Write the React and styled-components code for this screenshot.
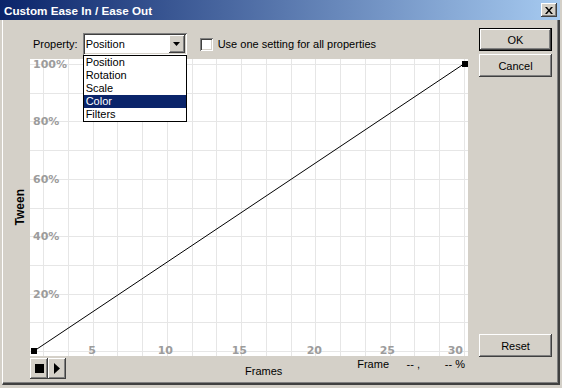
import React from 'react';
import styled, { createGlobalStyle } from 'styled-components';

const GlobalStyle = createGlobalStyle`
  html, body {
    margin: 0;
    padding: 0;
    background: #d4d0c8;
  }
  body {
    font-family: "Liberation Sans", Arial, sans-serif;
    font-size: 11px;
    color: #000;
  }
`;

const raised = `
  background: #d4d0c8;
  box-shadow: inset -1px -1px #404040, inset 1px 1px #fff, inset -2px -2px #808080, inset 2px 2px #d4d0c8;
`;

const sunken = `
  background: #fff;
  box-shadow: inset 1px 1px #808080, inset -1px -1px #fff, inset 2px 2px #404040, inset -2px -2px #d4d0c8;
`;

const Window = styled.div`
  width: 562px;
  height: 388px;
  display: flex;
  flex-direction: column;
  background: #d4d0c8;
  overflow: hidden;
`;

const TitleBar = styled.div`
  flex: none;
  width: 560px;
  height: 20px;
  box-sizing: border-box;
  display: flex;
  align-items: center;
  justify-content: space-between;
  padding: 0 3px 0 4px;
  background: linear-gradient(to right, #0a246a, #a6caf0);
  color: #fff;
  font-weight: bold;
  font-size: 11.7px;
`;

const CloseButton = styled.div`
  width: 16px;
  height: 14px;
  display: flex;
  align-items: center;
  justify-content: center;
  ${raised}
`;

const Frame = styled.div`
  flex: 1;
  display: flex;
  margin: 0 2px 3px 2px;
  border-left: 1px solid #fff;
  border-right: 2px solid #404040;
  border-bottom: 2px solid #404040;
  box-shadow: inset -1px -1px #808080;
`;

const MainCol = styled.div`
  width: 465px;
  display: flex;
  flex-direction: column;
`;

const TopRow = styled.div`
  display: flex;
  align-items: center;
  height: 22px;
  margin: 13px 0 4px;
  padding-left: 30px;
`;

const FieldLabel = styled.span`
  margin-right: 5px;
`;

const Select = styled.div`
  position: relative;
  width: 104px;
  height: 22px;
  box-sizing: border-box;
  display: flex;
  align-items: center;
  justify-content: space-between;
  padding: 2px 2px 2px 3px;
  ${sunken}
`;

const ArrowButton = styled.div`
  width: 16px;
  height: 18px;
  display: flex;
  align-items: center;
  justify-content: center;
  ${raised}
`;

const DropList = styled.ul`
  position: absolute;
  top: 22px;
  left: 0;
  width: 104px;
  box-sizing: border-box;
  margin: 0;
  padding: 0;
  list-style: none;
  background: #fff;
  border: 1px solid #000;
  z-index: 5;
`;

const DropItem = styled.li`
  height: 13px;
  line-height: 13px;
  padding-left: 2px;
  background: ${p => (p.$active ? '#0a246a' : 'transparent')};
  color: ${p => (p.$active ? '#fff' : '#000')};
`;

const Check = styled.div`
  width: 13px;
  height: 13px;
  margin: 0 5px 0 13px;
  ${sunken}
`;

const ChartRow = styled.div`
  display: flex;
  height: 297px;
`;

const AxisTitle = styled.div`
  width: 27px;
  box-sizing: border-box;
  padding-left: 6px;
  display: flex;
  align-items: center;
  justify-content: center;
  span {
    writing-mode: vertical-rl;
    transform: rotate(180deg);
    font-weight: bold;
    font-size: 12px;
  }
`;

const ChartBox = styled.div`
  width: 438px;
  height: 297px;
  background: #fff;
`;

const BottomRow = styled.div`
  flex: 1;
  display: flex;
  padding-left: 27px;
  padding-right: 3px;
`;

const PlayGroup = styled.div`
  display: flex;
  margin-top: 2px;
  height: 21px;
`;

const PlayButton = styled.div`
  width: 18px;
  height: 21px;
  display: flex;
  align-items: center;
  justify-content: center;
  ${raised}
`;

const FramesLabel = styled.div`
  margin: 9px 0 0 179px;
`;

const Readout = styled.div`
  margin: 2px 0 0 auto;
  display: flex;
`;

const ReadoutValue = styled.span`
  width: ${p => p.$w}px;
  text-align: right;
  white-space: pre;
`;

const ButtonCol = styled.div`
  width: 73px;
  margin-left: 11px;
  padding: 8px 0 26px;
  display: flex;
  flex-direction: column;
  gap: 3px;
`;

const PushButton = styled.div`
  height: 23px;
  display: flex;
  align-items: center;
  justify-content: center;
  ${raised}
  ${p => p.$default && `
    box-shadow: inset 0 0 0 1px #000, inset -2px -2px #404040, inset 2px 2px #fff, inset -3px -3px #808080;
  `}
  ${p => p.$bottom && 'margin-top: auto;'}
`;

const GRID = '#e6e6e6';
const LABEL = '#9c9c9c';

function EaseChart() {
  const vLines = Array.from({ length: 18 }, (_, k) => Math.round(13 + 24.76 * k) + 0.5);
  const hLines = Array.from({ length: 11 }, (_, k) => Math.round(5 + 28.7 * k) + 0.5);
  const yLabels = [100, 80, 60, 40, 20];
  const xLabels = [[5, 66], [10, 143], [15, 217], [20, 292], [25, 365], [30, 433]];
  return (
    <svg width="438" height="297" style={{ display: 'block' }}>
      <g stroke={GRID} strokeWidth="1" shapeRendering="crispEdges">
        {vLines.map(x => <line key={'v' + x} x1={x} y1="0" x2={x} y2="297" />)}
        {hLines.map(y => <line key={'h' + y} x1="0" y1={y} x2="438" y2={y} />)}
      </g>
      <g fill={LABEL} fontFamily='"DejaVu Sans", Verdana, sans-serif' fontWeight="bold" fontSize="11">
        {yLabels.map(p => {
          const y = 5 + ((100 - p) / 10) * 28.7;
          return <text key={p} x="3" y={y + 4}>{p}%</text>;
        })}
        {xLabels.map(([n, x]) => <text key={n} x={x} y="295" textAnchor="end">{n}</text>)}
      </g>
      <line x1="4" y1="292" x2="434.5" y2="4.5" stroke="#000" strokeWidth="1" />
      <rect x="1" y="289" width="6" height="6" fill="#000" />
      <rect x="432" y="2" width="6" height="6" fill="#000" />
    </svg>
  );
}

export default function App() {
  const options = ['Position', 'Rotation', 'Scale', 'Color', 'Filters'];
  return (
    <>
      <GlobalStyle />
      <Window>
        <TitleBar>
          <span>Custom Ease In / Ease Out</span>
          <CloseButton>
            <svg width="8" height="7" viewBox="0 0 8 7">
              <path d="M0 0h2l2 2.5L6 0h2L5 3.5 8 7H6L4 4.5 2 7H0l3-3.5z" fill="#000" />
            </svg>
          </CloseButton>
        </TitleBar>
        <Frame>
          <MainCol>
            <TopRow>
              <FieldLabel>Property:</FieldLabel>
              <Select>
                <span>Position</span>
                <ArrowButton>
                  <svg width="7" height="4" viewBox="0 0 7 4">
                    <path d="M0 0h7L3.5 4z" fill="#000" />
                  </svg>
                </ArrowButton>
                <DropList>
                  {options.map(o => (
                    <DropItem key={o} $active={o === 'Color'}>{o}</DropItem>
                  ))}
                </DropList>
              </Select>
              <Check />
              <span>Use one setting for all properties</span>
            </TopRow>
            <ChartRow>
              <AxisTitle><span>Tween</span></AxisTitle>
              <ChartBox>
                <EaseChart />
              </ChartBox>
            </ChartRow>
            <BottomRow>
              <PlayGroup>
                <PlayButton>
                  <svg width="9" height="9"><rect width="9" height="9" fill="#000" /></svg>
                </PlayButton>
                <PlayButton>
                  <svg width="6" height="11" viewBox="0 0 6 11"><path d="M0 0l6 5.5L0 11z" fill="#000" /></svg>
                </PlayButton>
              </PlayGroup>
              <FramesLabel>Frames</FramesLabel>
              <Readout>
                <span>Frame</span>
                <ReadoutValue $w={31}>{'-- ,'}</ReadoutValue>
                <ReadoutValue $w={45}>{'-- %'}</ReadoutValue>
              </Readout>
            </BottomRow>
          </MainCol>
          <ButtonCol>
            <PushButton $default>OK</PushButton>
            <PushButton>Cancel</PushButton>
            <PushButton $bottom>Reset</PushButton>
          </ButtonCol>
        </Frame>
      </Window>
    </>
  );
}
